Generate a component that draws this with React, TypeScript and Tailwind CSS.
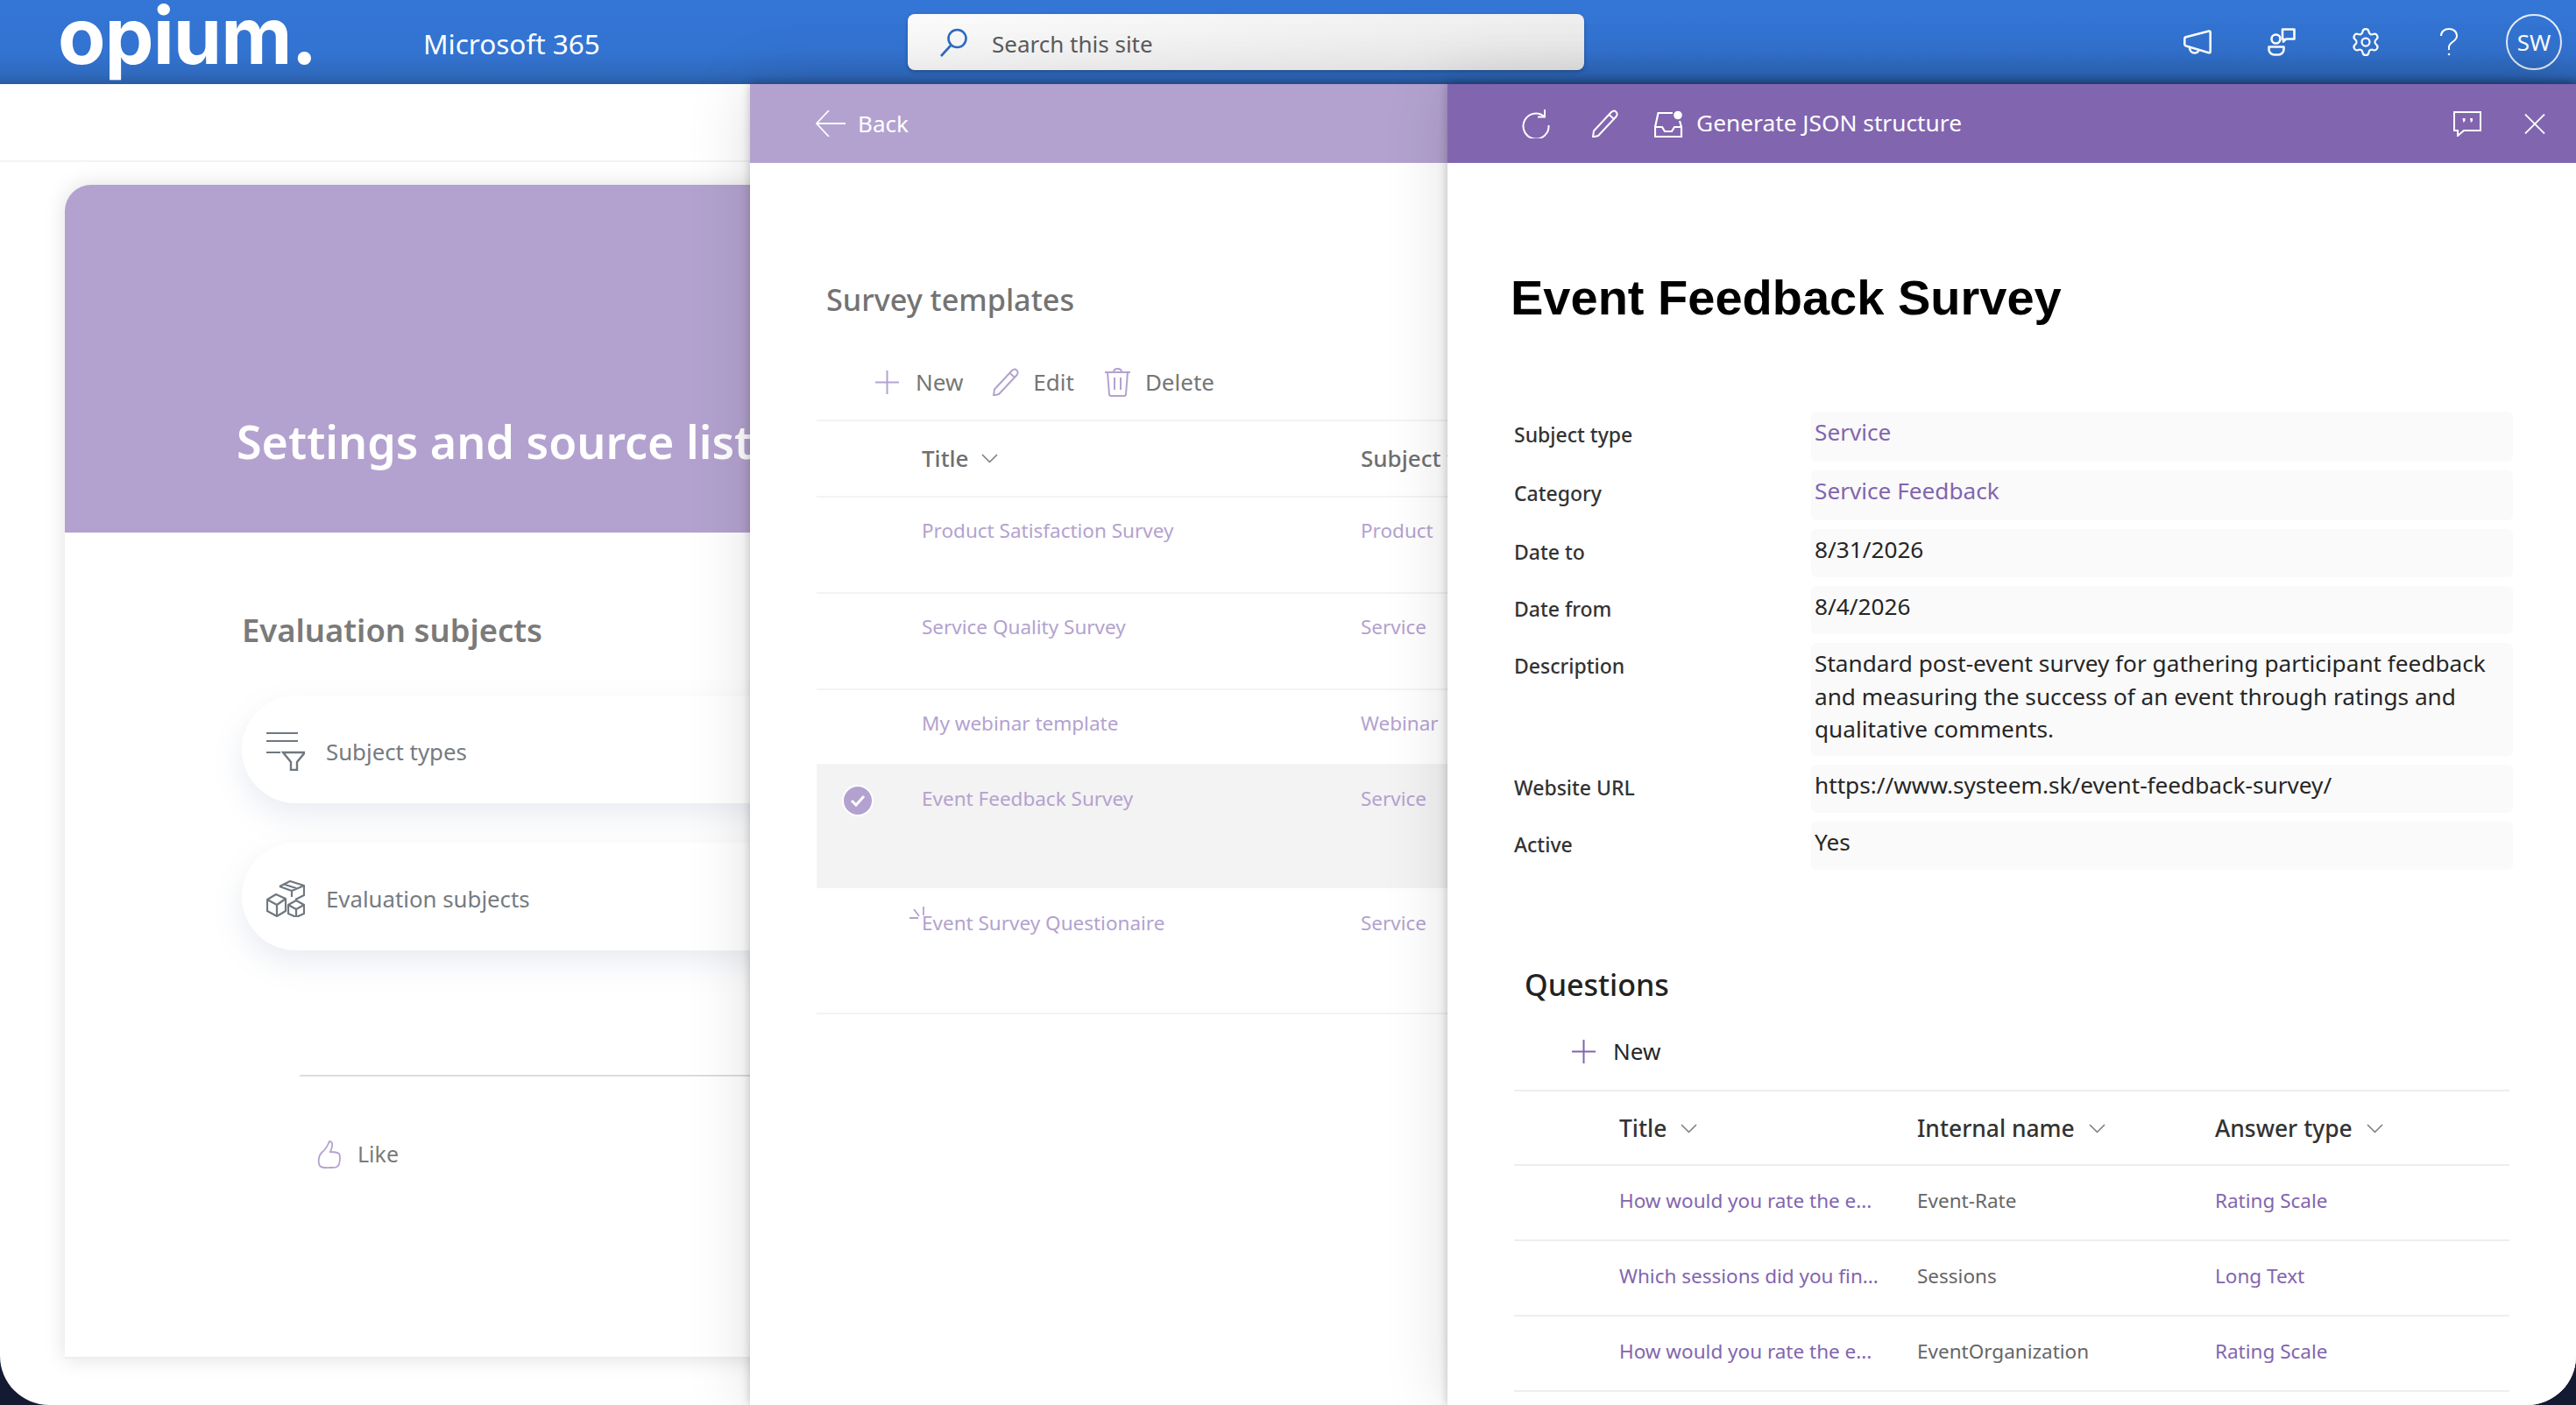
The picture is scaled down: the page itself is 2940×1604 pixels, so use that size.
import { Settings } from 'lucide-react'

const templates = [
  { title: 'Product Satisfaction Survey', subject: 'Product', row: 'h-[110px] border-b-2 border-[#f3f3f3] pt-[24px]' },
  { title: 'Service Quality Survey', subject: 'Service', row: 'h-[110px] border-b-2 border-[#f3f3f3] pt-[24px]' },
  { title: 'My webinar template', subject: 'Webinar', row: 'h-[84px] pt-[24px]' },
  { title: 'Event Feedback Survey', subject: 'Service', row: 'h-[142px] bg-[#f3f3f3] pt-[26px]', selected: true },
  { title: 'Event Survey Questionaire', subject: 'Service', row: 'h-[144px] border-b-2 border-[#f3f3f3] pt-[26px]', busy: true },
]

const fields = [
  { label: 'Subject type', value: 'Service', link: true, box: 'h-[57px]' },
  { label: 'Category', value: 'Service Feedback', link: true, box: 'h-[57px]' },
  { label: 'Date to', value: '8/31/2026', box: 'h-[55px]' },
  { label: 'Date from', value: '8/4/2026', box: 'h-[55px]' },
  {
    label: 'Description',
    value: 'Standard post-event survey for gathering participant feedback and measuring the success of an event through ratings and qualitative comments.',
    box: 'h-[129px]',
  },
  { label: 'Website URL', value: 'https://www.systeem.sk/event-feedback-survey/', box: 'h-[55px]' },
  { label: 'Active', value: 'Yes', box: 'h-[55px]' },
]

const questions = [
  { title: 'How would you rate the e...', name: 'Event-Rate', type: 'Rating Scale' },
  { title: 'Which sessions did you fin...', name: 'Sessions', type: 'Long Text' },
  { title: 'How would you rate the e...', name: 'EventOrganization', type: 'Rating Scale' },
]

function Chevron() {
  return (
    <svg width="19" height="11" viewBox="0 0 19 11" fill="none" stroke="#7a7a7a" strokeWidth="1.5">
      <path d="M1 1l8.5 8.5L18 1" />
    </svg>
  )
}

function Plus({ color }: { color: string }) {
  return (
    <svg width="27" height="27" viewBox="0 0 27 27" fill="none" stroke={color} strokeWidth="2">
      <path d="M13.5 0v27M0 13.5h27" />
    </svg>
  )
}

function Pencil({ color }: { color: string }) {
  return (
    <svg width="32" height="32" viewBox="0 0 32 32" fill="none" stroke={color} strokeWidth="2" strokeLinejoin="round">
      <path d="M3 24.5 22.5 3.5c1.8-2.1 4-2.5 5.7-1 1.8 1.5 1.9 3.8.2 5.8L8 30l-6 1.5z" />
      <path d="M20.5 6l6 5.2" />
    </svg>
  )
}

function HeaderIcons() {
  return (
    <div className="flex items-center">
      <svg className="ml-0" width="32" height="28" viewBox="0 0 32 28" fill="none" stroke="white" strokeWidth="2.6" strokeLinejoin="round">
        <path d="M2 8.5 29 1.5c1-.2 1.7.3 1.7 1.300V25c0 1-.7 1.500-1.700 1.200L3 18.500c-1.200-.4-1.700-1-1.700-2v-6c0-1 .5-1.700.7-2z" />
        <path d="M7 20c0 4 2.500 6.500 5.500 6.500s4.500-1.500 5-3.500" />
      </svg>
      <svg className="ml-[64px]" width="32" height="32" viewBox="0 0 32 32" fill="none" stroke="white" strokeWidth="2.6" strokeLinejoin="round">
        <circle cx="9.500" cy="12.500" r="5" />
        <path d="M1.500 21.500h17v3c0 3.500-3 6-6 6h-5c-3 0-6-2.500-6-6z" />
        <path d="M17 1.500h13.500v11H21l-3 3v-3h-1z" />
      </svg>
      <Settings className="ml-[62px]" size={36} color="white" strokeWidth={1.500} />
      <svg className="ml-[67px]" width="20" height="32" viewBox="0 0 20 32" fill="none" stroke="white" strokeWidth="2">
        <path d="M1 9C1 4 5 1 10 1s9 3 9 8c0 6-8 7-9 12v4" />
        <circle cx="10" cy="30" r="1.300" fill="white" stroke="none" />
      </svg>
      <div className="ml-[55px] flex h-16 w-16 items-center justify-center rounded-full border-2 border-[#e6edf8] text-[26px] text-white">
        SW
      </div>
    </div>
  )
}

function ThumbIcon() {
  return (
    <svg width="27" height="32" viewBox="0 0 27 32" fill="none" stroke="#b3a2cf" strokeWidth="1.800">
      <path d="M14 1c-2 5-4 9-9 13-4 4-4 12-2 15 3 3 8 2 12 2 5 0 9 0 10-4s2-8 0-12c-3-2-8-2-10-2 2-4 4-12-1-12z" />
    </svg>
  )
}

function FilterLines() {
  return (
    <svg width="44" height="45" viewBox="0 0 44 45" fill="none" stroke="#6f7780" strokeWidth="2">
      <path d="M0 2h36M0 11h36M0 24h16" />
      <path d="M19 24h25l-9 11v9h-7v-9z" strokeWidth="2.400" />
    </svg>
  )
}

function Boxes() {
  return (
    <svg width="44" height="42" viewBox="0 0 44 42" fill="none" stroke="#6f7780" strokeWidth="2.200" strokeLinejoin="round">
      <path d="M15 7 27 1l16 5v11l-10 5" />
      <path d="M15 7l14 5 14-6M29 12v7M20 4.500l14 4.500" />
      <path d="M1 22l10-6 11 5v14l-10 6-11-6z" />
      <path d="M1 22l11 6 10-7M12 28v13" />
      <path d="M25 28l9-5 9 5v10l-9 4-9-4z" />
      <path d="M25 28l9 5 9-5M34 33v9" />
    </svg>
  )
}

export default function App() {
  return (
    <div className="h-[1604px] w-[2940px] overflow-hidden bg-[#151a33] font-['Noto_Sans',sans-serif]">
      <div className="flex h-full flex-col overflow-hidden rounded-b-[56px] bg-white">
        <header className="flex h-24 shrink-0 items-center bg-[linear-gradient(180deg,#3476d6_0%,#3373d1_62%,#2f6abe_88%,#2a5ca4_100%)]">
          <div className="mb-[14px] ml-[66px] w-[417px] font-['Inter',sans-serif] text-[89px] leading-[80px] font-bold tracking-[-1px] text-white blur-[0.6px]">
            opium.
          </div>
          <div className="w-[553px] pt-[4px] text-[31.500px] text-white">Microsoft 365</div>
          <div className="flex h-16 w-[772px] items-center rounded-lg bg-[linear-gradient(170deg,#fbfbfb,#e9e9e9)] pl-9 shadow-[0_2px_4px_rgba(0,0,0,0.25)]">
            <svg width="32" height="33" viewBox="0 0 32 33" fill="none" stroke="#2d6bc4" strokeWidth="2.600">
              <circle cx="20.500" cy="12" r="10" />
              <path d="M13 20 2 32" />
            </svg>
            <span className="ml-7 pt-[4px] text-[26px] text-[#5c5c5c]">Search this site</span>
          </div>
          <div className="ml-[684px]">
            <HeaderIcons />
          </div>
        </header>

        <main className="relative flex-1">
          <div className="h-[89px] border-b-2 border-[#f3f3f3]" />
          <section className="mt-[26px] ml-[74px] h-[1340px] w-[2792px] rounded-t-[30px] border-b-2 border-[#eeeeee] bg-white shadow-[0_0_24px_rgba(0,0,0,0.13)]">
            <div className="h-[397px] rounded-t-[30px] bg-[#b3a2cf] pt-[258px] pl-[196px] text-[52px] leading-[70px] font-semibold text-white">
              Settings and source lists
            </div>
            <div className="ml-[202px]">
              <h2 className="mt-[89px] mb-[53px] text-[36.400px] leading-[44px] font-semibold text-[#7a7a7a]">Evaluation subjects</h2>
              <div className="flex h-[123px] w-[1400px] items-center rounded-full bg-white pt-[4px] pl-7 shadow-[0_14px_34px_rgba(110,130,165,0.15)]">
                <FilterLines />
                <span className="ml-[24px] pt-[2px] text-[25.800px] text-[#767b82]">Subject types</span>
              </div>
              <div className="mt-[45px] flex h-[123px] w-[1400px] items-center rounded-full bg-white pt-[4px] pl-7 shadow-[0_14px_34px_rgba(110,130,165,0.15)]">
                <Boxes />
                <span className="ml-[24px] pt-[2px] text-[25.800px] text-[#767b82]">Evaluation subjects</span>
              </div>
            </div>
            <div className="mt-[142px] ml-[268px] border-t-2 border-[#dcdcdc] pt-[70px] pl-5">
              <div className="flex items-center">
                <ThumbIcon />
                <span className="ml-[19px] text-[25px] text-[#7a7a7a]">Like</span>
              </div>
            </div>
          </section>

          <section className="absolute top-0 right-0 bottom-0 left-[856px] bg-white shadow-[0_0_10px_rgba(0,0,0,0.22),0_0_70px_rgba(0,0,0,0.13)]">
            <div className="flex h-[90px] items-center bg-[#b3a2cf] pl-[75px] text-white">
              <svg width="34" height="30" viewBox="0 0 34 30" fill="none" stroke="white" strokeWidth="1.800">
                <path d="M15 0 1 15l14 15M1 15h33" />
              </svg>
              <span className="ml-[14px] text-[26px]">Back</span>
            </div>
            <div className="ml-[76px]">
              <h2 className="mt-[136px] pl-[11px] text-[34.200px] leading-[40px] font-medium text-[#737373]">Survey templates</h2>
              <div className="mt-[31px] flex h-[88px] items-center border-b-2 border-[#f3f3f3] pl-[67px] text-[26px] text-[#767676]">
                <Plus color="#b3a2cf" />
                <span className="ml-[19px]">New</span>
                <span className="ml-[33px]"><Pencil color="#b3a2cf" /></span>
                <span className="ml-[15px]">Edit</span>
                <svg className="ml-[35px]" width="29" height="33" viewBox="0 0 29 33" fill="none" stroke="#b3a2cf" strokeWidth="2">
                  <path d="M0 5h29M10 5c0-2.500 2-4 4.500-4S19 2.500 19 5M3 5l2 25c0 1 1 2 2 2h15c1 0 2-1 2-2l2-25M11 11v14M18 11v14" />
                </svg>
                <span className="ml-[17px]">Delete</span>
              </div>
              <div className="grid h-[87px] grid-cols-[120px_501px_1fr] items-center border-b-2 border-[#f3f3f3] text-[26px] font-medium text-[#6f6f6f]">
                <span />
                <span className="flex items-center gap-[14px]">Title <Chevron /></span>
                <span>Subject type</span>
              </div>
              {templates.map((t) => (
                <div key={t.title} className={`relative grid grid-cols-[120px_501px_1fr] text-[22.500px] leading-[28px] text-[#b3a2cf] ${t.row}`}>
                  <span className="pl-[29px]">
                    {t.selected ? (
                      <span className="-mt-[2px] flex h-[36px] w-[36px] items-center justify-center rounded-full border-2 border-white bg-[#b3a2cf]">
                        <svg width="18" height="14" viewBox="0 0 18 14" fill="none" stroke="white" strokeWidth="3">
                          <path d="M2 7l5 5 9-10" />
                        </svg>
                      </span>
                    ) : null}
                  </span>
                  <span>{t.title}</span>
                  <span>{t.subject}</span>
                  {t.busy ? (
                    <svg className="absolute top-[21px] left-[106px]" width="17" height="14" viewBox="0 0 17 14" fill="none" stroke="#b3a2cf" strokeWidth="1.800">
                      <path d="M16 0v10M5 3l6 8M0 13h10" />
                    </svg>
                  ) : null}
                </div>
              ))}
            </div>
          </section>

          <section className="absolute top-0 right-0 bottom-0 left-[1652px] bg-white shadow-[0_0_10px_rgba(0,0,0,0.22),0_0_70px_rgba(0,0,0,0.13)]">
            <div className="flex h-[90px] items-center bg-[#8265af] pl-[85px] text-white">
              <svg width="32" height="33" viewBox="0 0 32 33" fill="none" stroke="white" strokeWidth="2">
                <path d="M26 8.500A14.500 14.500 0 1 0 30.500 18" />
                <path d="M26 0v8.500h-8" />
              </svg>
              <span className="ml-[47px]"><Pencil color="white" /></span>
              <svg className="ml-[40px]" width="33" height="31" viewBox="0 0 33 31" fill="none" stroke="white" strokeWidth="2.200">
                <path d="M21 3H4.500L1 19v11h30V19l-2-7" />
                <path d="M1 19h8l3 5h8l3-5h8" />
                <circle cx="27" cy="5.500" r="4.800" fill="white" stroke="none" />
              </svg>
              <span className="ml-[15px] text-[26.300px]">Generate JSON structure</span>
              <svg className="ml-[561px]" width="32" height="29" viewBox="0 0 32 29" fill="none" stroke="white" strokeWidth="2">
                <path d="M1 1h30v21H12l-7 6v-6H1z" />
                <path d="M10.500 8h3v3l-2 2M19 8h3v3l-2 2" fill="white" stroke="none" />
              </svg>
              <svg className="ml-[49px]" width="24" height="23" viewBox="0 0 24 23" fill="none" stroke="white" strokeWidth="1.800">
                <path d="M1 .5l22 22M23 .5l-22 22" />
              </svg>
            </div>

            <div className="ml-[76px]">
              <h1 className="mt-[122px] mb-[98px] -ml-1 font-['Liberation_Sans',Arial,sans-serif] text-[56px] leading-[64px] font-bold text-black">
                Event Feedback Survey
              </h1>
              <div className="flex flex-col gap-[10px]">
                {fields.map((f) => (
                  <div key={f.label} className="grid grid-cols-[339px_801px]">
                    <span className="pt-[10px] text-[23px] leading-[32px] font-medium text-[#333333]">{f.label}</span>
                    <div className={`rounded-md bg-[#fafafa] pt-[5px] pr-5 pl-[4px] text-[26.200px] leading-[37.500px] ${f.box} ${f.link ? 'text-[#8265af]' : 'text-[#262626]'}`}>
                      {f.value}
                    </div>
                  </div>
                ))}
              </div>

              <h2 className="mt-[109px] pl-3 text-[34px] leading-[44px] font-medium text-[#222222]">Questions</h2>
              <div className="flex h-[100px] w-[1136px] items-center border-b-2 border-[#eeeeee] pt-[10px] pl-[66px] text-[26px] text-[#262626]">
                <Plus color="#8265af" />
                <span className="ml-[20px]">New</span>
              </div>
              <div className="grid h-[85px] w-[1136px] grid-cols-[120px_340px_340px_1fr] items-center border-b-2 border-[#eeeeee] pt-[3px] text-[26.400px] font-medium text-[#333333]">
                <span />
                <span className="flex items-center gap-4">Title <Chevron /></span>
                <span className="flex items-center gap-4">Internal name <Chevron /></span>
                <span className="flex items-center gap-4">Answer type <Chevron /></span>
              </div>
              {questions.map((q, i) => (
                <div key={i} className="grid h-[86px] w-[1136px] grid-cols-[120px_340px_340px_1fr] items-center border-b-2 border-[#eeeeee] pb-1 text-[22.500px]">
                  <span />
                  <span className="text-[#8265af]">{q.title}</span>
                  <span className="text-[#666666]">{q.name}</span>
                  <span className="text-[#8265af]">{q.type}</span>
                </div>
              ))}
            </div>
          </section>
        </main>
      </div>
    </div>
  )
}
